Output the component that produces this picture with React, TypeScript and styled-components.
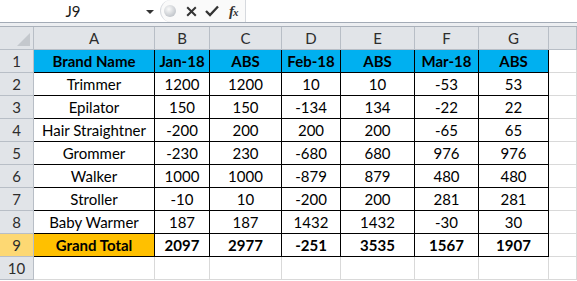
import React from 'react'
import styled, { createGlobalStyle } from 'styled-components'

const GlobalStyle = createGlobalStyle`
  body {
    margin: 0;
    background: #fff;
    font-family: Lato, "Liberation Sans", sans-serif;
  }
`

const columns = ['A', 'B', 'C', 'D', 'E', 'F', 'G']
const widths = [34, 121, 55, 72, 59, 74, 64, 70]

const header = ['Brand Name', 'Jan-18', 'ABS', 'Feb-18', 'ABS', 'Mar-18', 'ABS']

const rows: (string | number)[][] = [
  ['Trimmer', 1200, 1200, 10, 10, -53, 53],
  ['Epilator', 150, 150, -134, 134, -22, 22],
  ['Hair Straightner', -200, 200, 200, 200, -65, 65],
  ['Grommer', -230, 230, -680, 680, 976, 976],
  ['Walker', 1000, 1000, -879, 879, 480, 480],
  ['Stroller', -10, 10, -200, 200, 281, 281],
  ['Baby Warmer', 187, 187, 1432, 1432, -30, 30],
]

const totals = ['Grand Total', 2097, 2977, -251, 3535, 1567, 1907]

const Sheet = styled.div`
  width: 577px;
  height: 281px;
  overflow: hidden;
  background: #fff;
`

const FormulaBar = styled.div`
  display: flex;
  height: 23px;
  box-sizing: border-box;
  border-bottom: 1px solid #a3abb6;
`

const NameBox = styled.div`
  position: relative;
  width: 160px;
  display: flex;
  align-items: center;
  justify-content: center;
  padding-right: 14px;
  box-sizing: border-box;
  font-size: 15px;
  color: #1a1a1a;
`

const Arrow = styled.span`
  position: absolute;
  right: 6px;
  top: 10px;
  width: 0;
  height: 0;
  border-left: 4px solid transparent;
  border-right: 4px solid transparent;
  border-top: 4px solid #333;
`

const ButtonArea = styled.div`
  width: 86px;
  display: flex;
  align-items: center;
  background: #fafafa;
  border-left: 1px solid #d6d9de;
  border-right: 1px solid #d6d9de;
  border-top-left-radius: 11px;
  border-bottom-left-radius: 11px;
  padding-left: 3px;
  box-sizing: border-box;
`

const Grip = styled.span`
  width: 12px;
  height: 12px;
  border-radius: 50%;
  background: radial-gradient(circle at 40% 35%, #fafafa, #c4c8cd 70%);
  margin-right: 10px;
`

const IconSlot = styled.span<{ $gap: number }>`
  display: flex;
  margin-right: ${(p) => p.$gap}px;
`

const Fx = styled.span`
  font-family: "Liberation Serif", serif;
  font-style: italic;
  font-weight: bold;
  font-size: 15px;
  color: #333;
  letter-spacing: -1px;

  small {
    font-size: 11px;
  }
`

const FormulaInput = styled.div`
  flex: 1;
  background: #fff;
`

const Strip = styled.div`
  height: 4px;
  background: #eceef1;
  border-bottom: 1px solid #aab1ba;
  box-sizing: border-box;
`

const Grid = styled.div`
  display: grid;
  grid-template-columns: ${widths.map((w) => `${w}px`).join(' ')} 1fr;
  grid-auto-rows: 23px;
`

const HeadCell = styled.div<{ $selected?: boolean }>`
  display: flex;
  align-items: center;
  justify-content: center;
  box-sizing: border-box;
  border-right: 1px solid #b8bec6;
  border-bottom: 1px solid #b8bec6;
  background: ${(p) => (p.$selected ? '#fdd873' : '#e1e4e8')};
  font-size: 15px;
  color: #2d2d2d;
`

const Corner = styled(HeadCell)`
  position: relative;

  &::after {
    content: '';
    position: absolute;
    right: 3px;
    bottom: 3px;
    border-left: 13px solid transparent;
    border-bottom: 13px solid #c4c8cd;
  }
`

const Cell = styled.div<{ $fill?: string; $bold?: boolean; $boxed?: boolean }>`
  display: flex;
  align-items: center;
  justify-content: center;
  box-sizing: border-box;
  border-right: 1px solid ${(p) => (p.$boxed ? '#000' : '#d9d9d9')};
  border-bottom: 1px solid ${(p) => (p.$boxed ? '#000' : '#d9d9d9')};
  background: ${(p) => p.$fill || '#fff'};
  font-size: 15px;
  font-weight: ${(p) => (p.$bold ? 700 : 400)};
  color: #000;
  white-space: nowrap;
`

const CrossIcon = () => (
  <svg width="11" height="11" viewBox="0 0 11 11">
    <path d="M1.2 1.2 L9.8 9.8 M9.8 1.2 L1.2 9.8" stroke="#333" strokeWidth="2" />
  </svg>
)

const CheckIcon = () => (
  <svg width="14" height="12" viewBox="0 0 14 12">
    <path d="M1 6 L5 10 L13 1.5" stroke="#333" strokeWidth="2.3" fill="none" />
  </svg>
)

const App = () => {
  return (
    <Sheet>
      <GlobalStyle />
      <FormulaBar>
        <NameBox>
          J9
          <Arrow />
        </NameBox>
        <ButtonArea>
          <Grip />
          <IconSlot $gap={8}>
            <CrossIcon />
          </IconSlot>
          <IconSlot $gap={10}>
            <CheckIcon />
          </IconSlot>
          <Fx>
            f<small>x</small>
          </Fx>
        </ButtonArea>
        <FormulaInput />
      </FormulaBar>
      <Strip />
      <Grid>
        <Corner />
        {columns.map((c) => (
          <HeadCell key={c}>{c}</HeadCell>
        ))}
        <HeadCell />

        <HeadCell>1</HeadCell>
        {header.map((h, i) => (
          <Cell key={i} $fill="#00b0f0" $bold $boxed>
            {h}
          </Cell>
        ))}
        <Cell />

        {rows.map((r, ri) => (
          <React.Fragment key={ri}>
            <HeadCell>{ri + 2}</HeadCell>
            {r.map((v, ci) => (
              <Cell key={ci} $boxed>
                {v}
              </Cell>
            ))}
            <Cell />
          </React.Fragment>
        ))}

        <HeadCell $selected>9</HeadCell>
        {totals.map((v, i) => (
          <Cell key={i} $bold $boxed $fill={i === 0 ? '#ffc000' : undefined}>
            {v}
          </Cell>
        ))}
        <Cell />

        <HeadCell>10</HeadCell>
        {columns.map((c) => (
          <Cell key={c} />
        ))}
        <Cell />
      </Grid>
    </Sheet>
  )
}

export default App
